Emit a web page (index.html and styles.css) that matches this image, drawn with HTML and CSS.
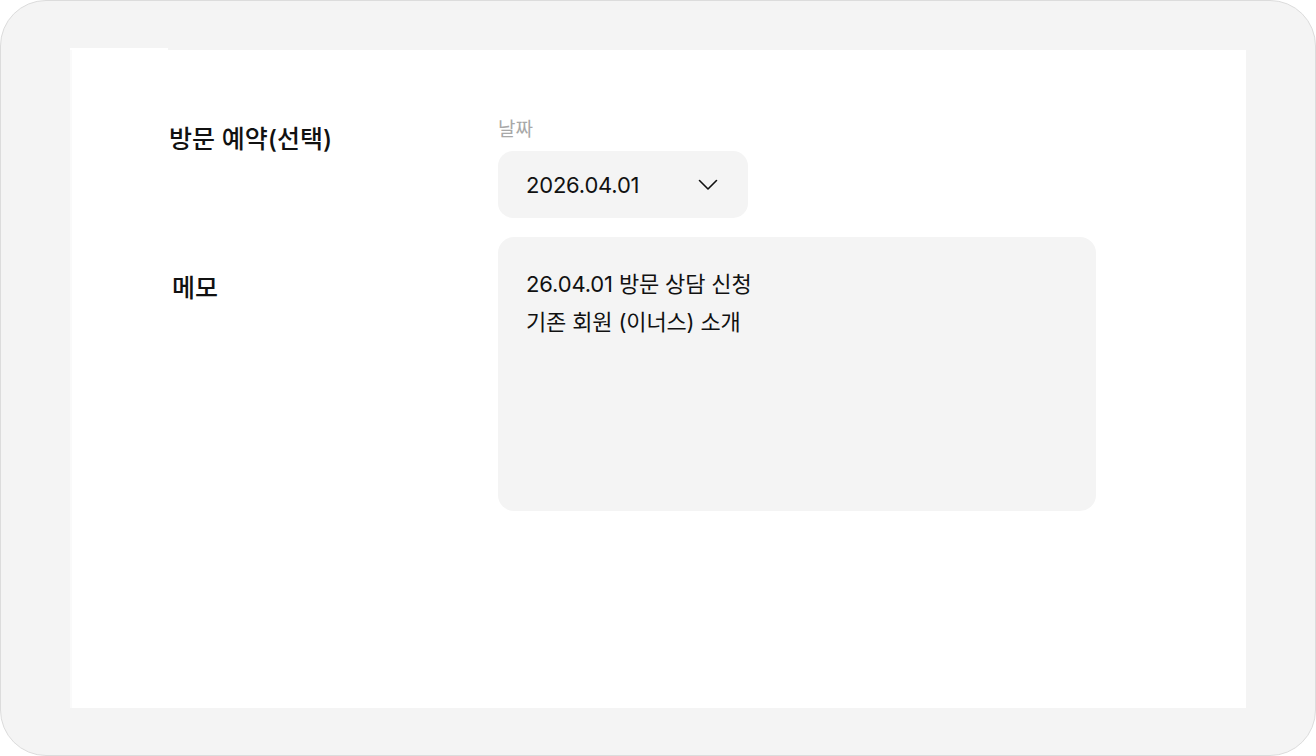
FILE: index.html
```html
<!DOCTYPE html>
<html lang="ko">
<head>
<meta charset="utf-8">
<link rel="stylesheet" href="styles.css">
</head>
<body>
<div class="frame">
  <div class="panel">
    <div class="form">
      <div class="label label-visit">방문 예약(선택)</div>
      <div class="field">
        <div class="caption">날짜</div>
        <div class="select">
          <span class="select-value">2026.04.01</span>
          <svg class="chevron" width="20" height="12" viewBox="0 0 20 12" aria-hidden="true">
            <path d="M1.5 1.5 L10 10 L18.5 1.5" fill="none" stroke="#111" stroke-width="1.6" stroke-linecap="round" stroke-linejoin="round"/>
          </svg>
        </div>
      </div>
      <div class="label label-memo">메모</div>
      <div class="field">
        <div class="memo">26.04.01 방문 상담 신청<br>기존 회원 (이너스) 소개</div>
      </div>
    </div>
  </div>
</div>
</body>
</html>
```

FILE: styles.css
```css
* { box-sizing: border-box; }
html, body { margin: 0; padding: 0; background: #ffffff; }
body {
  font-family: Inter, "Noto Sans CJK KR", sans-serif;
  color: #111111;
}
.frame {
  width: 1316px;
  height: 756px;
  background: #f4f4f4;
  border: 1px solid #dcdcdc;
  border-radius: 46px;
  padding: 49px 69px 47px 71px;
}
.panel {
  position: relative;
  width: 1174px;
  height: 658px;
  background: #ffffff;
  padding: 70px 0 0 97px;
}
.panel::before {
  content: "";
  position: absolute;
  left: -2px;
  top: -2px;
  width: 98px;
  height: 2px;
  background: #ffffff;
}
.panel::after {
  content: "";
  position: absolute;
  left: -2px;
  top: 0;
  width: 2px;
  height: 100%;
  background: #fafafa;
}
.form {
  display: grid;
  grid-template-columns: 329px 600px;
  row-gap: 19px;
  align-items: start;
}
.label {
  font-size: 25px;
  line-height: 30px;
  font-weight: 500;
}
.label-visit { margin-top: 4px; }
.label-memo { margin-top: 36px; padding-left: 3px; }
.caption {
  font-size: 19px;
  line-height: 20px;
  color: #a8a8a8;
  margin-bottom: 11px;
}
.select {
  width: 250px;
  height: 67px;
  background: #f4f4f4;
  border-radius: 15px;
  display: flex;
  align-items: center;
  justify-content: space-between;
  padding: 0 30px 0 28px;
}
.select-value {
  font-size: 22px;
  letter-spacing: -0.2px;
}
.chevron { display: block; }
.memo {
  width: 598px;
  height: 274px;
  background: #f4f4f4;
  border-radius: 16px;
  padding: 28px 28px;
  font-size: 22px;
  line-height: 38px;
  letter-spacing: -0.15px;
}
```
